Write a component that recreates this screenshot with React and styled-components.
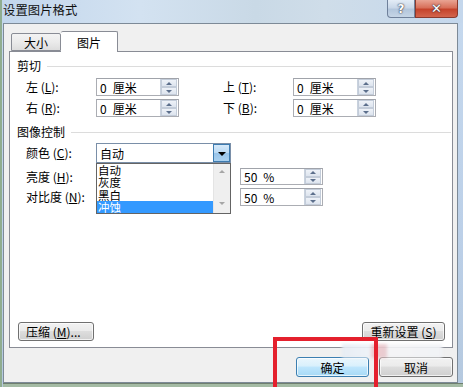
import React from 'react';
import styled, { createGlobalStyle } from 'styled-components';

const Global = createGlobalStyle`
  html, body { margin: 0; padding: 0; }
  body {
    width: 463px; height: 387px; overflow: hidden;
    background: #9fb99f;
    font-family: "Noto Sans CJK SC", "Liberation Sans", sans-serif;
    font-size: 12px; color: #000;
  }
  #root { width: 463px; height: 387px; }
`;

const Window = styled.div`
  position: relative;
  width: 463px; height: 387px;
  overflow: hidden;
  box-sizing: border-box;
  border-left: 2px solid #90ad90;
  background: linear-gradient(180deg, #c6d9ee 0, #bcd0e8 60%, #b5c9df 100%);
  display: flex; flex-direction: column;
`;

const TitleBar = styled.div`
  height: 23px; flex: none;
  display: flex; align-items: flex-start;
  padding-left: 1px;
  background: linear-gradient(90deg, #c2d6ec 0, #d3e2f1 30%, #c9d9e6 55%, #cfdde9 70%, #c4d7ec 100%);
`;

const Title = styled.div`
  font-size: 12.3px; line-height: 12px; margin-top: 4px;
  color: #111; letter-spacing: 0.1px;
  flex: 1;
`;

const CaptionButtons = styled.div`
  display: flex; margin-right: 5px;
`;

const CapButton = styled.div`
  width: ${p => p.$w}px; height: 18px; box-sizing: border-box;
  display: flex; align-items: center; justify-content: center;
  border: 1px solid ${p => (p.$close ? '#8a3a2e' : '#6f809a')};
  border-top: none;
  border-radius: ${p => (p.$close ? '0 0 4px 0' : '0 0 0 4px')};
  background: ${p => p.$close
    ? 'linear-gradient(180deg, #e9a493 0, #d8705a 45%, #c5432b 55%, #d3654d 100%)'
    : 'linear-gradient(180deg, #e3ecf6 0, #c9d7e8 45%, #b3c6dc 55%, #c6d5e6 100%)'};
  color: #fff;
  font-family: "DejaVu Sans", sans-serif;
  font-weight: bold;
  font-size: ${p => (p.$close ? '13px' : '12px')};
  text-shadow: 0 0 2px #334, 0 0 1px #223;
`;

const Body = styled.div`
  flex: none;
  margin-left: 1px;
  width: 455px; height: 360px;
  box-sizing: border-box;
  border: 1px solid #7d8a97;
  background: #f0f0f0;
  padding: 7px 4px 0 5px;
  display: flex; flex-direction: column;
`;

const TabRow = styled.div`
  height: 20px; display: flex; align-items: flex-end;
  padding-left: 2px; position: relative; z-index: 1;
`;

const Tab = styled.div`
  box-sizing: border-box;
  width: ${p => p.$w}px;
  height: ${p => (p.$active ? 21 : 18)}px;
  margin-bottom: ${p => (p.$active ? -1 : 0)}px;
  border: 1px solid #898c95;
  border-bottom: ${p => (p.$active ? 'none' : '1px solid #898c95')};
  border-left: ${p => (p.$active ? 'none' : '1px solid #898c95')};
  border-radius: 2px 2px 0 0;
  background: ${p => (p.$active ? '#fff' : 'linear-gradient(180deg, #f3f3f3 0, #ebebeb 50%, #dddddd 100%)')};
  display: flex; justify-content: center; align-items: center;
  padding-top: ${p => (p.$active ? 0 : 1)}px;
  font-size: 12px;
`;

const Panel = styled.div`
  width: 444px; height: 297px; box-sizing: border-box;
  border: 1px solid #898c95;
  background: #fff;
  display: flex; flex-direction: column;
`;

const SectionHeader = styled.div`
  height: 13px; margin-top: ${p => p.$mt}px;
  display: flex; align-items: center;
  padding-left: 7px;
  &::after {
    content: ''; flex: 1; height: 1px; background: #dcdcdc;
    margin: 1px 1px 0 6px;
  }
`;

const FieldGrid = styled.div`
  display: grid;
  grid-template-columns: 70px 83px 44px 70px 83px;
  grid-auto-rows: 18px;
  row-gap: 3px;
  padding-left: 16px;
  margin-top: 6px;
  align-items: center;
`;

const Label = styled.div`
  font-size: 12px; line-height: 14px; white-space: pre;
  u { text-decoration: underline; text-underline-offset: 1px; }
`;

const Field = styled.div`
  box-sizing: border-box;
  width: ${p => p.$w || 83}px; height: ${p => p.$h || 18}px;
  border: 1px solid #abadb3;
  border-top-color: #a0a3aa;
  background: #fff;
  display: flex; align-items: stretch;
`;

const FieldValue = styled.div`
  flex: 1; padding-left: 3px;
  display: flex; align-items: center;
  font-size: 12px; white-space: pre;
`;

const Spinner = styled.div`
  width: 16px; margin: 0 1px 0 0;
  display: flex; flex-direction: column;
  border-left: 1px solid #c9d2de;
`;

const SpinHalf = styled.div`
  flex: 1;
  display: flex; align-items: center; justify-content: center;
  background: linear-gradient(180deg, #eef2f8 0, #dde4ee 100%);
  border: 1px solid #c3ccd9;
  &::before {
    content: '';
    border-left: 3px solid transparent;
    border-right: 3px solid transparent;
    ${p => (p.$up ? 'border-bottom: 3px solid #5c6f8c;' : 'border-top: 3px solid #5c6f8c;')}
  }
`;

const ControlRow = styled.div`
  display: flex; align-items: center;
  padding-left: 16px;
  margin-top: ${p => p.$mt}px;
  height: ${p => p.$h}px;
`;

const RowLabel = styled(Label)`
  width: 70px; flex: none;
`;

const ComboWrap = styled.div`
  position: relative; width: 135px; height: 20px;
`;

const Combo = styled.div`
  box-sizing: border-box; width: 135px; height: 20px;
  border: 1px solid #7a8fa8;
  background: #fff;
  display: flex;
`;

const ComboText = styled.div`
  flex: 1; padding-left: 3px; display: flex; align-items: center;
`;

const ComboButton = styled.div`
  width: 17px; box-sizing: border-box;
  border: 1px solid #3d7bb0;
  background: linear-gradient(180deg, #d6e9f9 0, #b9d9f4 50%, #98c4ea 51%, #a9d0ef 100%);
  display: flex; align-items: center; justify-content: center;
  &::before {
    content: '';
    border-left: 4px solid transparent;
    border-right: 4px solid transparent;
    border-top: 4px solid #000;
    margin-top: 1px;
  }
`;

const DropList = styled.div`
  position: absolute; left: 0; top: 20px;
  width: 135px; height: 51px; box-sizing: border-box;
  border: 1px solid #646464;
  background: #fff;
  display: flex; z-index: 5;
`;

const ListItems = styled.div`
  flex: 1; display: flex; flex-direction: column;
`;

const ListItem = styled.div`
  height: 12.25px; line-height: 12px; font-size: 11.5px;
  padding-left: 1px; overflow: visible; white-space: nowrap;
  background: ${p => (p.$selected ? '#3399ff' : 'transparent')};
  color: ${p => (p.$selected ? '#fff' : '#000')};
  margin-top: ${p => (p.$selected ? 'auto' : '0')};
`;

const ListScroll = styled.div`
  width: 17px; background: #efefef;
  border-left: 1px solid #e4e4e4;
  display: flex; flex-direction: column; justify-content: space-between; align-items: center;
  padding: 6px 0 8px;
  box-sizing: border-box;
`;

const ScrollArrow = styled.div`
  border-left: 3px solid transparent;
  border-right: 3px solid transparent;
  ${p => (p.$up ? 'border-bottom: 3px solid #a6a6a6;' : 'border-top: 3px solid #a6a6a6;')}
`;

const Slider = styled.div`
  width: 135px; height: 2px; background: #d6d6d6; margin-right: 9px; flex: none;
`;

const Spacer = styled.div` flex: 1; `;

const PanelButtons = styled.div`
  display: flex; justify-content: space-between;
  padding: 0 7px 6px 8px;
`;

const Button = styled.div`
  box-sizing: border-box;
  width: ${p => p.$w}px; height: ${p => p.$h || 19}px;
  border: 1px solid ${p => (p.$default ? '#3c7fb1' : '#707070')};
  border-radius: 3px;
  background: ${p => (p.$default
    ? 'linear-gradient(180deg, #eaf6fd 0, #d9f0fc 45%, #bee6fd 50%, #a7d9f5 100%)'
    : 'linear-gradient(180deg, #f2f2f2 0, #ebebeb 45%, #dddddd 50%, #cfcfcf 100%)')};
  box-shadow: inset 0 0 0 1px rgba(255,255,255,0.7);
  display: flex; align-items: center; justify-content: ${p => p.$align || 'center'};
  padding-left: ${p => p.$pl || 0}px;
  font-size: 12px; white-space: pre;
  u { text-decoration: underline; }
`;

const Footer = styled.div`
  display: flex; justify-content: flex-end; gap: 10px;
  margin-top: 9px;
`;

const BottomFrame = styled.div`
  flex: 1; background: #a4bba4;
  border-top: 1px solid #6f7f6f;
  margin-left: 1px;
`;

const Annotation = styled.div`
  position: absolute; left: 271px; top: 337px;
  width: 105px; height: 70px; box-sizing: border-box;
  border: 4px solid #e4202d;
  z-index: 10;
`;

const Watermark = styled.div`
  position: absolute; left: 340px; top: 344px;
  width: 100px; height: 14px;
  background: linear-gradient(90deg, rgba(230,236,244,0.9) 0, rgba(238,242,248,0.9) 28%, rgba(236,196,200,0.9) 30%, rgba(232,200,205,0.9) 44%, rgba(244,244,246,0.9) 46%, rgba(240,242,246,0.9) 100%);
  filter: blur(1.5px);
  z-index: 9;
`;

const Mn = ({ children }) => <u>{children}</u>;

const SpinField = ({ value, h }) => (
  <Field $h={h}>
    <FieldValue>{value}</FieldValue>
    <Spinner>
      <SpinHalf $up />
      <SpinHalf />
    </Spinner>
  </Field>
);

export default function App() {
  return (
    <>
      <Global />
      <Window>
        <TitleBar>
          <Title>设置图片格式</Title>
          <CaptionButtons>
            <CapButton $w={28}>?</CapButton>
            <CapButton $w={43} $close>✕</CapButton>
          </CaptionButtons>
        </TitleBar>
        <Body>
          <TabRow>
            <Tab $w={50}>大小</Tab>
            <Tab $w={57} $active>图片</Tab>
          </TabRow>
          <Panel>
            <SectionHeader $mt={7}>剪切</SectionHeader>
            <FieldGrid>
              <Label>左 (<Mn>L</Mn>):</Label>
              <SpinField value={'0\u2002厘米'} />
              <span />
              <Label>上 (<Mn>T</Mn>):</Label>
              <SpinField value={'0\u2002厘米'} />
              <Label>右 (<Mn>R</Mn>):</Label>
              <SpinField value={'0\u2002厘米'} />
              <span />
              <Label>下 (<Mn>B</Mn>):</Label>
              <SpinField value={'0\u2002厘米'} />
            </FieldGrid>
            <SectionHeader $mt={8}>图像控制</SectionHeader>
            <ControlRow $mt={5} $h={20}>
              <RowLabel>颜色 (<Mn>C</Mn>):</RowLabel>
              <ComboWrap>
                <Combo>
                  <ComboText>自动</ComboText>
                  <ComboButton />
                </Combo>
                <DropList>
                  <ListItems>
                    <ListItem>自动</ListItem>
                    <ListItem>灰度</ListItem>
                    <ListItem>黑白</ListItem>
                    <ListItem $selected>冲蚀</ListItem>
                  </ListItems>
                  <ListScroll>
                    <ScrollArrow $up />
                    <ScrollArrow />
                  </ListScroll>
                </DropList>
              </ComboWrap>
            </ControlRow>
            <ControlRow $mt={5} $h={17}>
              <RowLabel>亮度 (<Mn>H</Mn>):</RowLabel>
              <Slider />
              <SpinField value={'50\u2002%'} h={17} />
            </ControlRow>
            <ControlRow $mt={3} $h={18}>
              <RowLabel>对比度 (<Mn>N</Mn>):</RowLabel>
              <Slider />
              <SpinField value={'50\u2002%'} h={18} />
            </ControlRow>
            <Spacer />
            <PanelButtons>
              <Button $w={76} $align="flex-start" $pl={7}>压缩 (<u>M</u>)...</Button>
              <Button $w={83}>重新设置 (<u>S</u>)</Button>
            </PanelButtons>
          </Panel>
          <Footer>
            <Button $w={73} $h={20} $default>确定</Button>
            <Button $w={74} $h={20}>取消</Button>
          </Footer>
        </Body>
        <BottomFrame />
        <Watermark />
        <Annotation />
      </Window>
    </>
  );
}
